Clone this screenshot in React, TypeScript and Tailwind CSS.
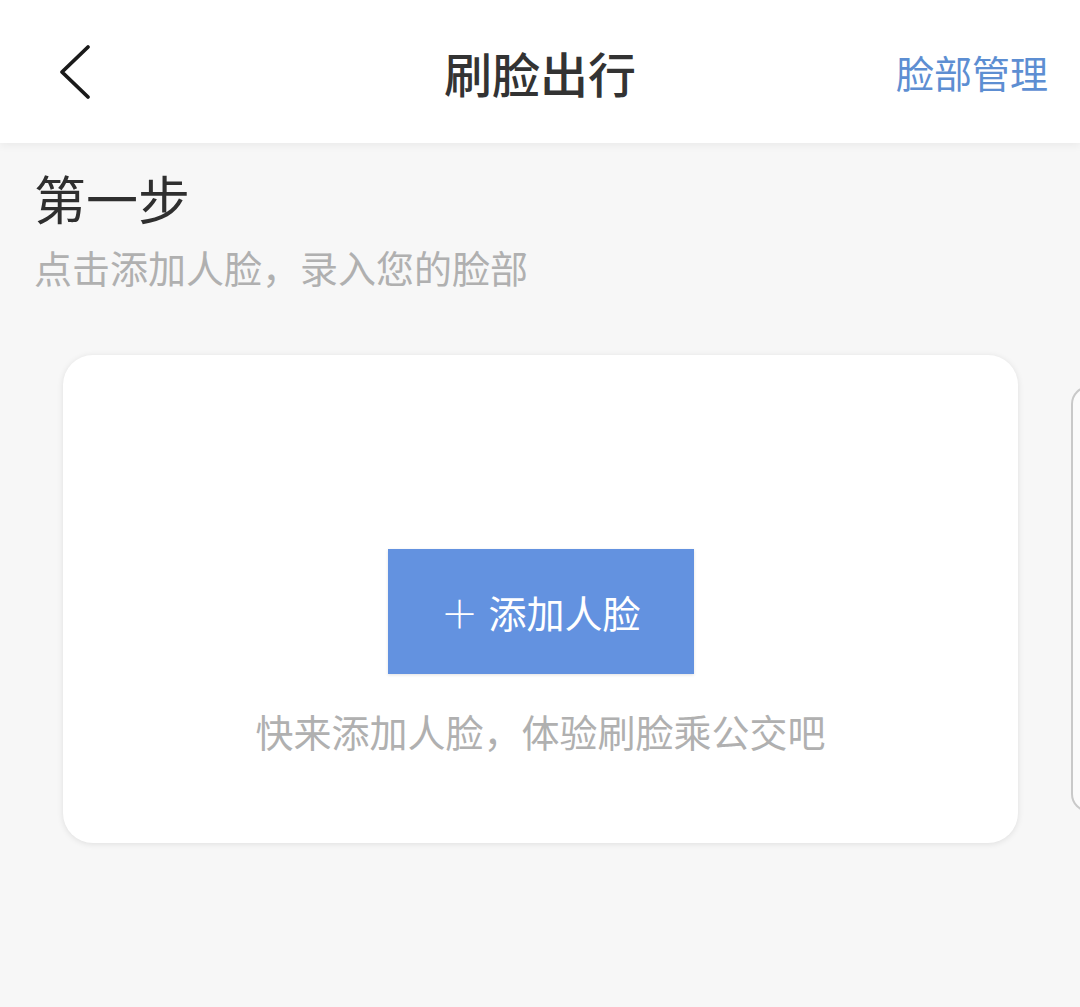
import React from 'react';

const cjk = { fontFamily: '"Noto Sans CJK SC", "Noto Sans", sans-serif' };

const App: React.FC = () => {
  return (
    <div className="w-[1080px] h-[1007px] bg-[#f7f7f7] overflow-hidden" style={cjk}>
      {/* header */}
      <div className="relative z-10 h-[143px] bg-white flex items-center shadow-[0_3px_8px_rgba(0,0,0,0.05)]">
        <div className="w-[220px] pl-[58px] flex items-center">
          <svg width="34" height="56" viewBox="0 0 34 56" fill="none">
            <path d="M30 3 L4 28 L30 53" stroke="#1a1a1a" strokeWidth="3.8" strokeLinecap="round" strokeLinejoin="round" />
          </svg>
        </div>
        <div className="flex-1 text-center text-[48px] leading-none font-medium text-[#333333] whitespace-nowrap">刷脸出行</div>
        <div className="w-[220px] pr-[32px] text-right text-[38px] leading-none text-[#5d8ed2] whitespace-nowrap">脸部管理</div>
      </div>

      {/* step */}
      <div className="px-[34px]">
        <div className="mt-[29px] text-[52px] leading-none text-[#2f2f2f]">第一步</div>
        <div className="mt-[24px] text-[38px] leading-none text-[#b0b0b0] whitespace-nowrap">点击添加人脸，录入您的脸部</div>
      </div>

      {/* cards */}
      <div className="mt-[69px] flex items-center">
        <div className="ml-[63px] w-[955px] h-[488px] shrink-0 bg-white rounded-[30px] shadow-[0_1px_6px_rgba(0,0,0,0.1)] flex flex-col items-center pt-[194px]">
          <button className="w-[306px] h-[125px] bg-[#6392e0] text-white text-[38px] leading-none flex items-center justify-center gap-[10px] shadow-[0_1px_3px_rgba(0,0,0,0.12)]">
            <span className="font-light">＋</span>
            <span>添加人脸</span>
          </button>
          <div className="mt-[38px] text-[38px] leading-none text-[#b0b0b0] whitespace-nowrap">快来添加人脸，体验刷脸乘公交吧</div>
        </div>
        <div className="ml-[53px] w-[955px] h-[426px] shrink-0 bg-[#fbfbfb] rounded-[18px] border-2 border-[#c9c9c9]" />
      </div>
    </div>
  );
};

export default App;
